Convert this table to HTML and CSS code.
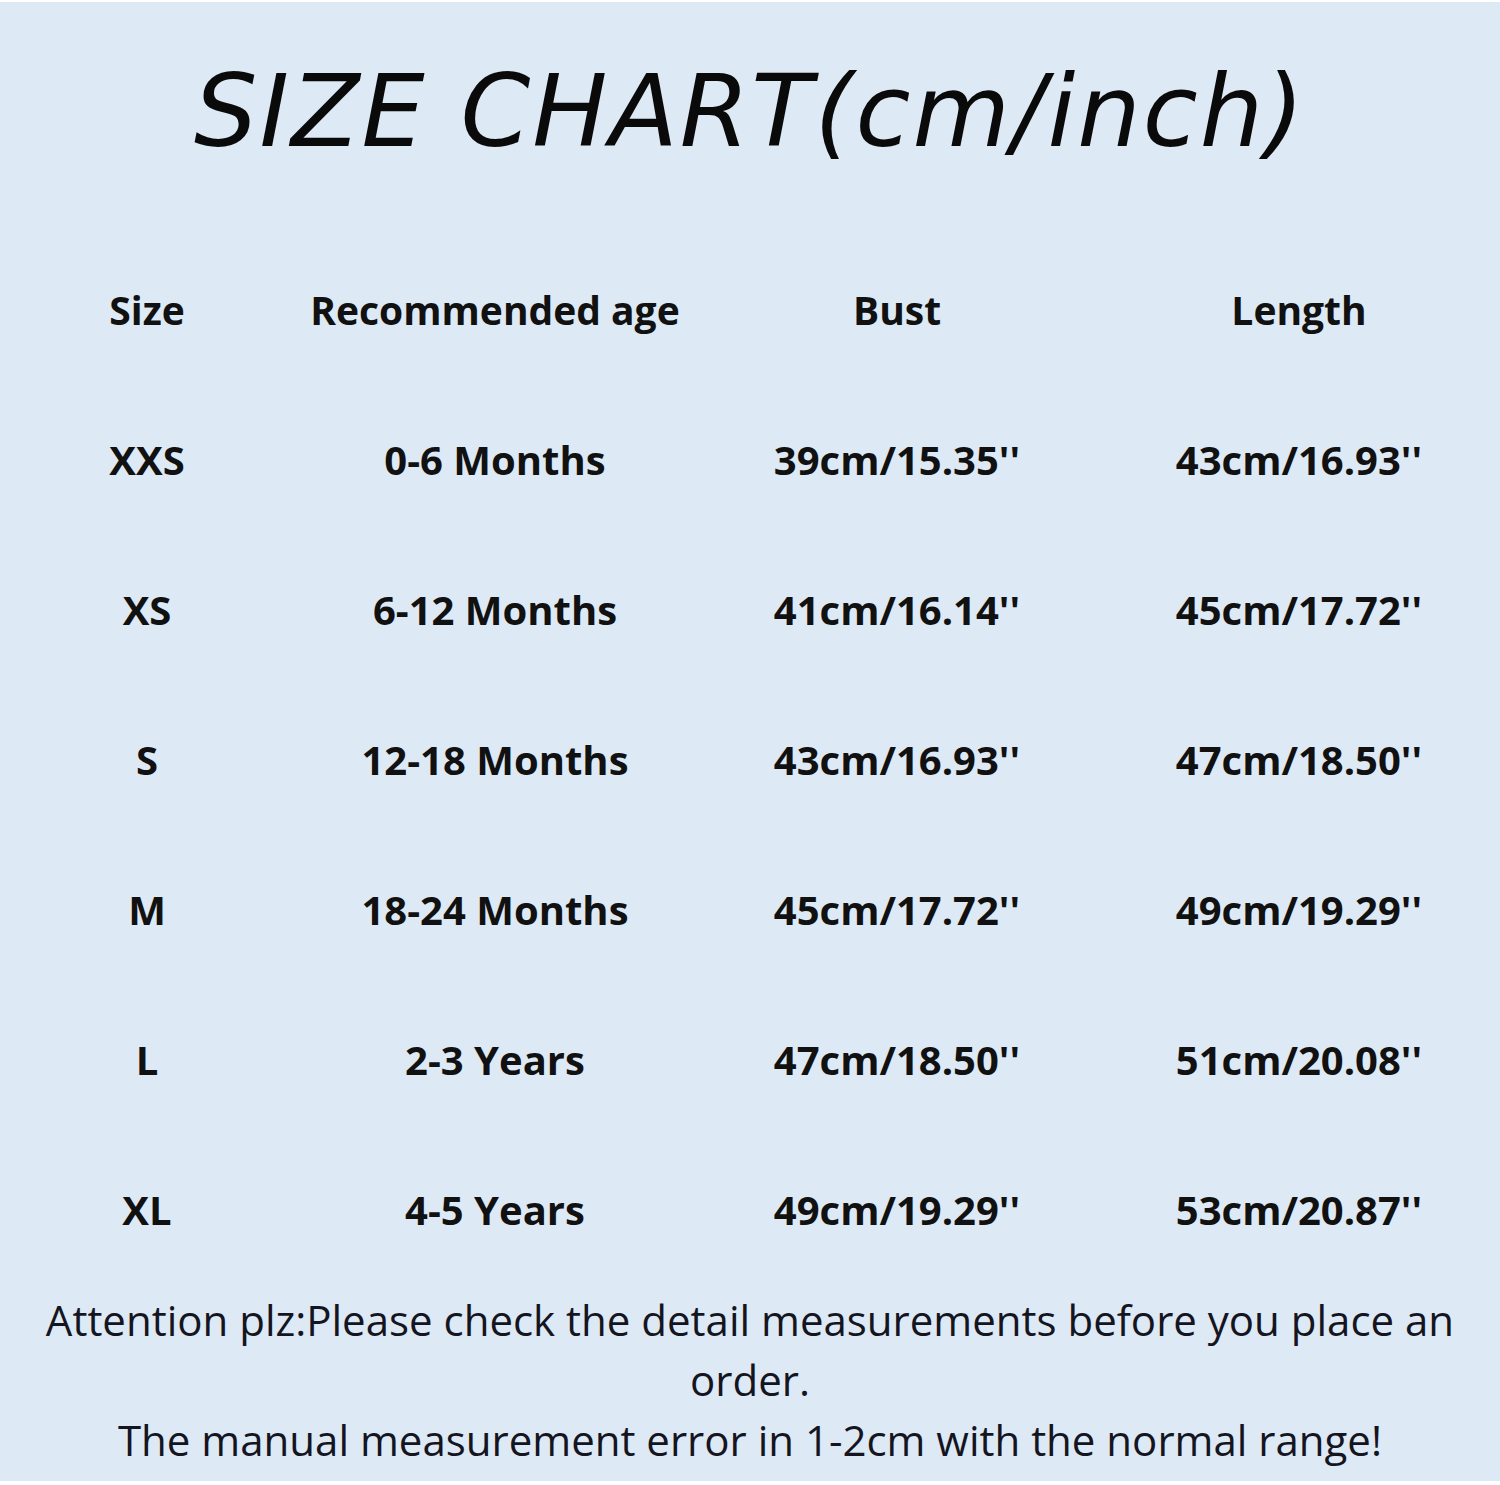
FILE: index.html
```html
<!DOCTYPE html>
<html>
<head>
<meta charset="utf-8">
<link rel="stylesheet" href="styles.css">
</head>
<body>
<div class="page">
  <h1 class="title">SIZE CHART(cm/inch)</h1>
  <div class="chart">
    <div class="row head"><span>Size</span><span>Recommended age</span><span>Bust</span><span>Length</span></div>
    <div class="row"><span>XXS</span><span>0-6 Months</span><span>39cm/15.35''</span><span>43cm/16.93''</span></div>
    <div class="row"><span>XS</span><span>6-12 Months</span><span>41cm/16.14''</span><span>45cm/17.72''</span></div>
    <div class="row"><span>S</span><span>12-18 Months</span><span>43cm/16.93''</span><span>47cm/18.50''</span></div>
    <div class="row"><span>M</span><span>18-24 Months</span><span>45cm/17.72''</span><span>49cm/19.29''</span></div>
    <div class="row"><span>L</span><span>2-3 Years</span><span>47cm/18.50''</span><span>51cm/20.08''</span></div>
    <div class="row"><span>XL</span><span>4-5 Years</span><span>49cm/19.29''</span><span>53cm/20.87''</span></div>
  </div>
  <div class="note">
    <p>Attention plz:Please check the detail measurements before you place an order.</p>
    <p>The manual measurement error in 1-2cm with the normal range!</p>
  </div>
</div>
</body>
</html>
```
FILE: styles.css
```css
html, body {
  margin: 0;
  padding: 0;
  background: #ffffff;
}
.page {
  width: 1500px;
  height: 1479px;
  margin-top: 2px;
  background: #dde9f5;
  display: flex;
  flex-direction: column;
  color: #111;
}
.title {
  margin: 0;
  height: 232px;
  padding-top: 40px;
  box-sizing: border-box;
  text-align: center;
  font-family: "DejaVu Sans", sans-serif;
  font-weight: normal;
  font-style: italic;
  font-size: 100px;
  line-height: 140px;
  letter-spacing: 2px;
  color: #0a0a0a;
}
.chart {
  display: flex;
  flex-direction: column;
}
.row {
  display: grid;
  grid-template-columns: 294px 402px 402px 402px;
  height: 150px;
  align-items: center;
  font-family: "Open Sans", sans-serif;
  font-weight: 700;
  font-size: 40px;
  color: #111;
}
.row span {
  text-align: center;
}
.row.head {
  font-size: 39px;
}
.note {
  margin-top: 6px;
  font-family: "Open Sans", sans-serif;
  font-size: 42px;
  color: #15151f;
  text-align: center;
  padding: 0 30px;
}
.note p {
  margin: 0;
  line-height: 60px;
}
```
